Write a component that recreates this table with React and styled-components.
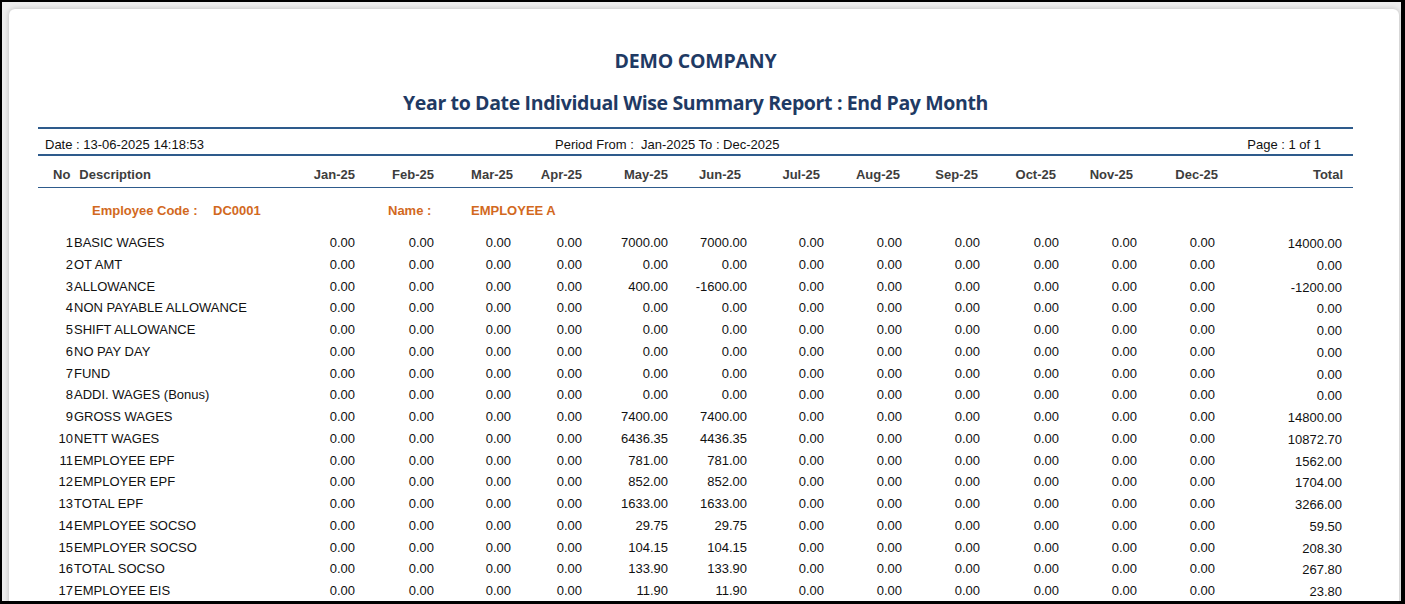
import React from "react";
import styled, { createGlobalStyle } from "styled-components";

const Global = createGlobalStyle`
  html, body { margin: 0; padding: 0; height: 604px; overflow: hidden; background: #000; }
  body { font-family: "Liberation Sans", Arial, sans-serif; }
  * { box-sizing: border-box; }
`;

const Frame = styled.div`
  width: 1405px;
  height: 604px;
  border-style: solid;
  border-color: #000;
  border-width: 2px 4px 3px 2px;
  background: #ededed;
  padding: 7px 2px 0 7px;
  overflow: hidden;
`;

const Panel = styled.div`
  background: #fff;
  height: 640px;
  border-radius: 6px 6px 0 0;
  box-shadow: 0 0 5px rgba(0, 0, 0, 0.22);
  padding: 39px 46px 0 29px;
`;

const Heading = styled.h1`
  margin: 0;
  font-family: "Open Sans", "Noto Sans", sans-serif;
  font-weight: 700;
  font-size: ${(p) => p.$size}px;
  letter-spacing: ${(p) => p.$ls}px;
  line-height: 26px;
  color: #1f3a64;
  text-align: center;
  margin-bottom: ${(p) => p.$mb}px;
`;

const InfoBar = styled.div`
  display: grid;
  grid-template-columns: 510px auto 1fr;
  border-top: 2px solid #2e5b8c;
  border-bottom: 2px solid #2e5b8c;
  padding: 8px 32px 2px 7px;
  font-size: 13px;
  line-height: 15px;
  color: #111;
`;

const PageNo = styled.span`
  text-align: right;
`;

const HeadRow = styled.div`
  display: grid;
  grid-template-columns: 235px 82px 79px 79px 69px 86px 73px 79px 80px 78px 78px 77px 85px 125px;
  padding: 11px 10px 5px 0;
  border-bottom: 1px solid #2e5b8c;
  font-size: 13px;
  font-weight: 700;
  line-height: 15px;
  color: #3d3d3d;
`;

const HeadLabel = styled.div`
  display: flex;
  gap: 9px;
  padding-left: 15px;
`;

const HeadCell = styled.div`
  text-align: right;
`;

const EmpRow = styled.div`
  display: grid;
  grid-template-columns: 121px 175px 83px auto;
  height: 44px;
  align-items: center;
  padding-left: 54px;
  font-size: 13px;
  font-weight: 700;
  color: #d2691e;
`;

const DataRow = styled.div`
  display: grid;
  grid-template-columns: 35px 200px 82px 79px 77px 71px 86px 79px 77px 78px 78px 79px 78px 78px 127px;
  height: 21.75px;
  font-size: 13px;
  line-height: 21.75px;
  color: #111;
  white-space: nowrap;
`;

const NoCell = styled.div`
  text-align: right;
`;

const DescCell = styled.div`
  padding-left: 1px;
`;

const Num = styled.div`
  text-align: right;
  padding-top: ${(p) => (p.$total ? 1 : 0)}px;
`;

const months = ["Jan", "Feb", "Mar", "Apr", "May", "Jun", "Jul", "Aug", "Sep", "Oct", "Nov", "Dec"];

const rows = [
  [1, "BASIC WAGES", 7000, 7000, 14000],
  [2, "OT AMT", 0, 0, 0],
  [3, "ALLOWANCE", 400, -1600, -1200],
  [4, "NON PAYABLE ALLOWANCE", 0, 0, 0],
  [5, "SHIFT ALLOWANCE", 0, 0, 0],
  [6, "NO PAY DAY", 0, 0, 0],
  [7, "FUND", 0, 0, 0],
  [8, "ADDI. WAGES (Bonus)", 0, 0, 0],
  [9, "GROSS WAGES", 7400, 7400, 14800],
  [10, "NETT WAGES", 6436.35, 4436.35, 10872.7],
  [11, "EMPLOYEE EPF", 781, 781, 1562],
  [12, "EMPLOYER EPF", 852, 852, 1704],
  [13, "TOTAL EPF", 1633, 1633, 3266],
  [14, "EMPLOYEE SOCSO", 29.75, 29.75, 59.5],
  [15, "EMPLOYER SOCSO", 104.15, 104.15, 208.3],
  [16, "TOTAL SOCSO", 133.9, 133.9, 267.8],
  [17, "EMPLOYEE EIS", 11.9, 11.9, 23.8],
];

const fmt = (n) => n.toFixed(2);

export default function App() {
  return (
    <>
      <Global />
      <Frame>
        <Panel>
          <Heading $size={19.5} $ls={-0.2} $mb={16}>DEMO COMPANY</Heading>
          <Heading $size={19.5} $ls={-0.36} $mb={11}>
            Year to Date Individual Wise Summary Report : End Pay Month
          </Heading>
          <InfoBar>
            <span>Date : 13-06-2025 14:18:53</span>
            <span>Period From :&nbsp; Jan-2025 To : Dec-2025</span>
            <PageNo>Page : 1 of 1</PageNo>
          </InfoBar>
          <HeadRow>
            <HeadLabel>
              <span>No</span>
              <span>Description</span>
            </HeadLabel>
            {months.map((m) => (
              <HeadCell key={m}>{m}-25</HeadCell>
            ))}
            <HeadCell>Total</HeadCell>
          </HeadRow>
          <EmpRow>
            <span>Employee Code :</span>
            <span>DC0001</span>
            <span>Name :</span>
            <span>EMPLOYEE A</span>
          </EmpRow>
          {rows.map(([no, desc, may, jun, total]) => (
            <DataRow key={no}>
              <NoCell>{no}</NoCell>
              <DescCell>{desc}</DescCell>
              {months.map((m) => (
                <Num key={m}>{m === "May" ? fmt(may) : m === "Jun" ? fmt(jun) : "0.00"}</Num>
              ))}
              <Num $total>{fmt(total)}</Num>
            </DataRow>
          ))}
        </Panel>
      </Frame>
    </>
  );
}
